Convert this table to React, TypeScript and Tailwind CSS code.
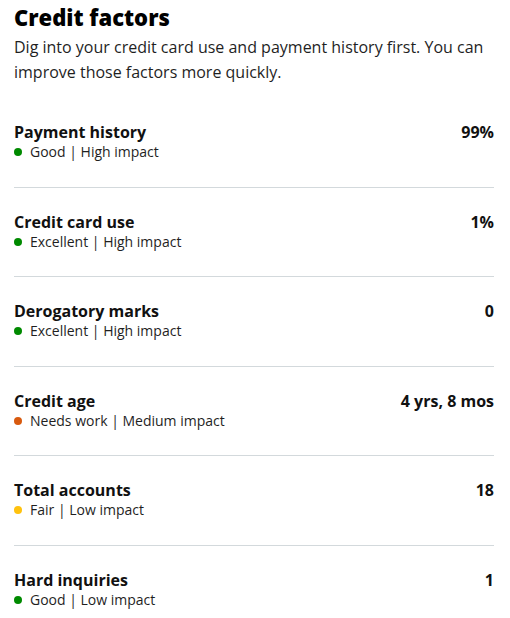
import React from "react";

type Factor = {
  name: string;
  value: string;
  rating: string;
  impact: string;
  dot: string;
};

const factors: Factor[] = [
  { name: "Payment history", value: "99%", rating: "Good", impact: "High impact", dot: "bg-[#008a00]" },
  { name: "Credit card use", value: "1%", rating: "Excellent", impact: "High impact", dot: "bg-[#008a00]" },
  { name: "Derogatory marks", value: "0", rating: "Excellent", impact: "High impact", dot: "bg-[#008a00]" },
  { name: "Credit age", value: "4 yrs, 8 mos", rating: "Needs work", impact: "Medium impact", dot: "bg-[#d85a0f]" },
  { name: "Total accounts", value: "18", rating: "Fair", impact: "Low impact", dot: "bg-[#ffc20e]" },
  { name: "Hard inquiries", value: "1", rating: "Good", impact: "Low impact", dot: "bg-[#008a00]" },
];

function FactorRow({ factor, last }: { factor: Factor; last: boolean }) {
  return (
    <div className={last ? "py-6" : "py-6 border-b border-[#d3d9dc]"}>
      <div className="flex items-start justify-between">
        <div>
          <div className="text-[16px] leading-5 font-bold text-[#111]">{factor.name}</div>
          <div className="flex items-center gap-2 text-[14px] leading-[20.5px] text-[#1f1f1f]">
            <span className={`inline-block h-2 w-2 rounded-full ${factor.dot}`} />
            <span>
              {factor.rating} | {factor.impact}
            </span>
          </div>
        </div>
        <div className="text-[16px] leading-5 font-bold text-[#111]">{factor.value}</div>
      </div>
    </div>
  );
}

export default function App() {
  return (
    <div
      className="w-[510px] h-[618px] bg-white pl-[14px] pr-[16px] pt-[3px] overflow-hidden"
      style={{ fontFamily: '"Open Sans", "Noto Sans", sans-serif' }}
    >
      <h1 className="text-[22px] leading-7 font-extrabold text-black">Credit factors</h1>
      <p className="mt-1 text-[16px] leading-[25px] text-[#1f1f1f]">
        Dig into your credit card use and payment history first. You can improve those factors more quickly.
      </p>
      <div className="mt-[13px]">
        {factors.map((f, i) => (
          <FactorRow key={f.name} factor={f} last={i === factors.length - 1} />
        ))}
      </div>
    </div>
  );
}
